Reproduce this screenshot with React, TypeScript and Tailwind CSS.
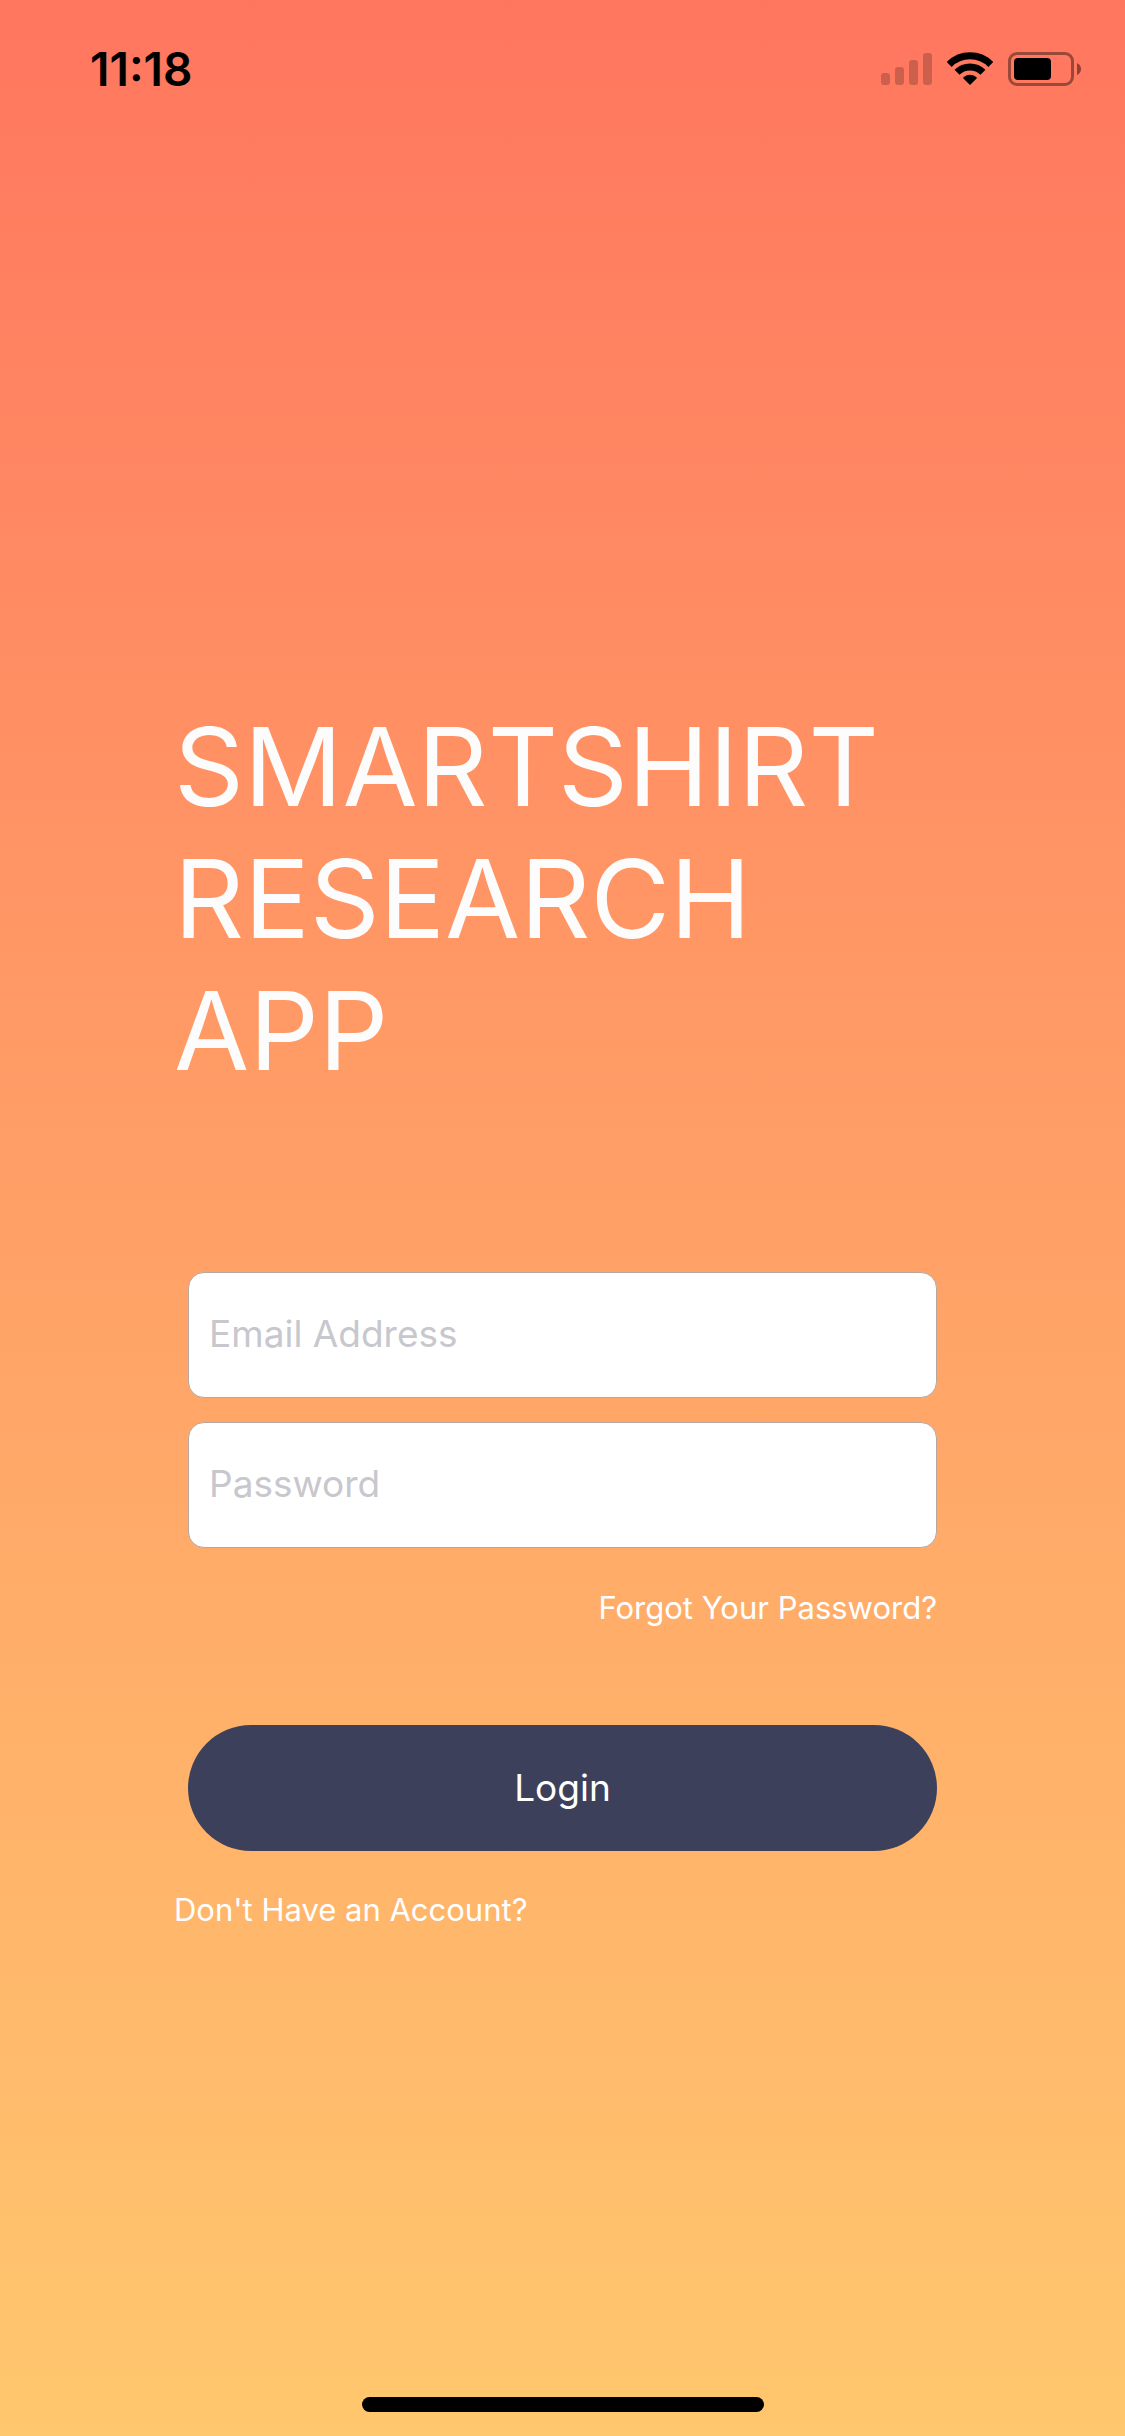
function SignalIcon() {
  return (
    <svg width="51" height="34" viewBox="0 0 51 34" aria-label="Cellular signal" role="img" opacity="0.2">
      <rect x="0" y="21" width="9" height="12" rx="3" />
      <rect x="14" y="15" width="9" height="18" rx="3" />
      <rect x="28" y="8" width="9" height="25" rx="3" />
      <rect x="42" y="1" width="9" height="32" rx="3" />
    </svg>
  );
}

function WifiIcon() {
  return (
    <svg width="46" height="34" viewBox="0 0 46 34" aria-label="Wi-Fi" role="img">
      <g fill="none" stroke="#000" strokeWidth="7">
        <path d="M2.2 12.5A29.3 29.3 0 0 1 43.8 12.5" />
        <path d="M10 20.3A18.4 18.4 0 0 1 36 20.3" />
      </g>
      <path d="M23 33 16.4 26.4Q15.8 25.6 16.7 25A10.8 10.8 0 0 1 29.3 25Q30.2 25.6 29.6 26.4Z" />
    </svg>
  );
}

function BatteryIcon() {
  return (
    <svg width="73" height="34" viewBox="0 0 73 34" aria-label="Battery" role="img">
      <rect x="1.5" y="1.5" width="63" height="31" rx="7.5" fill="none" stroke="#000" strokeWidth="3" opacity="0.4" />
      <rect x="6" y="6" width="37" height="22" rx="4" />
      <path d="M69 11Q73 13 73 17Q73 21 69 23Z" opacity="0.45" />
    </svg>
  );
}

function StatusBar() {
  return (
    <header className="flex h-[138px] items-center justify-between pr-11 pl-[90px] text-black">
      <time className="text-[46px] leading-none font-semibold">11:18</time>
      <div className="flex items-center gap-[15px]">
        <SignalIcon />
        <WifiIcon />
        <BatteryIcon />
      </div>
    </header>
  );
}

function Field({ label, type }: { label: string; type: string }) {
  return (
    <input
      type={type}
      aria-label={label}
      placeholder={label}
      className="block h-[126px] w-full rounded-2xl border border-[#b9a69c] bg-white px-5 pb-1 text-[37px] text-gray-800 placeholder:text-[#c7c7cd]"
    />
  );
}

export default function App() {
  return (
    <div className="flex min-h-screen flex-col bg-linear-to-b from-[#ff765f] to-[#ffc76e] font-['Inter',sans-serif] text-white">
      <StatusBar />
      <main className="flex flex-1 flex-col px-[174px] pt-[562px]">
        <h1 className="text-[109px] leading-[132px] text-[#fcfcfc]">
          SMARTSHIRT
          <br />
          RESEARCH
          <br />
          APP
        </h1>
        <form className="mt-44 flex flex-col" onSubmit={(e) => e.preventDefault()}>
          <div className="flex flex-col gap-6 px-[14px]">
            <Field label="Email Address" type="email" />
            <Field label="Password" type="password" />
            <a href="#forgot" className="mt-4 self-end text-[31px] leading-10">
              Forgot Your Password?
            </a>
            <button
              type="submit"
              className="mt-[73px] h-[126px] rounded-full bg-[#3d405b] text-[37px]"
            >
              Login
            </button>
          </div>
          <a href="#signup" className="mt-[39px] self-start text-[31px] leading-10">
            Don't Have an Account?
          </a>
        </form>
      </main>
      <footer className="flex justify-center pb-6">
        <div className="h-[15px] w-[402px] rounded-full bg-black" />
      </footer>
    </div>
  );
}
